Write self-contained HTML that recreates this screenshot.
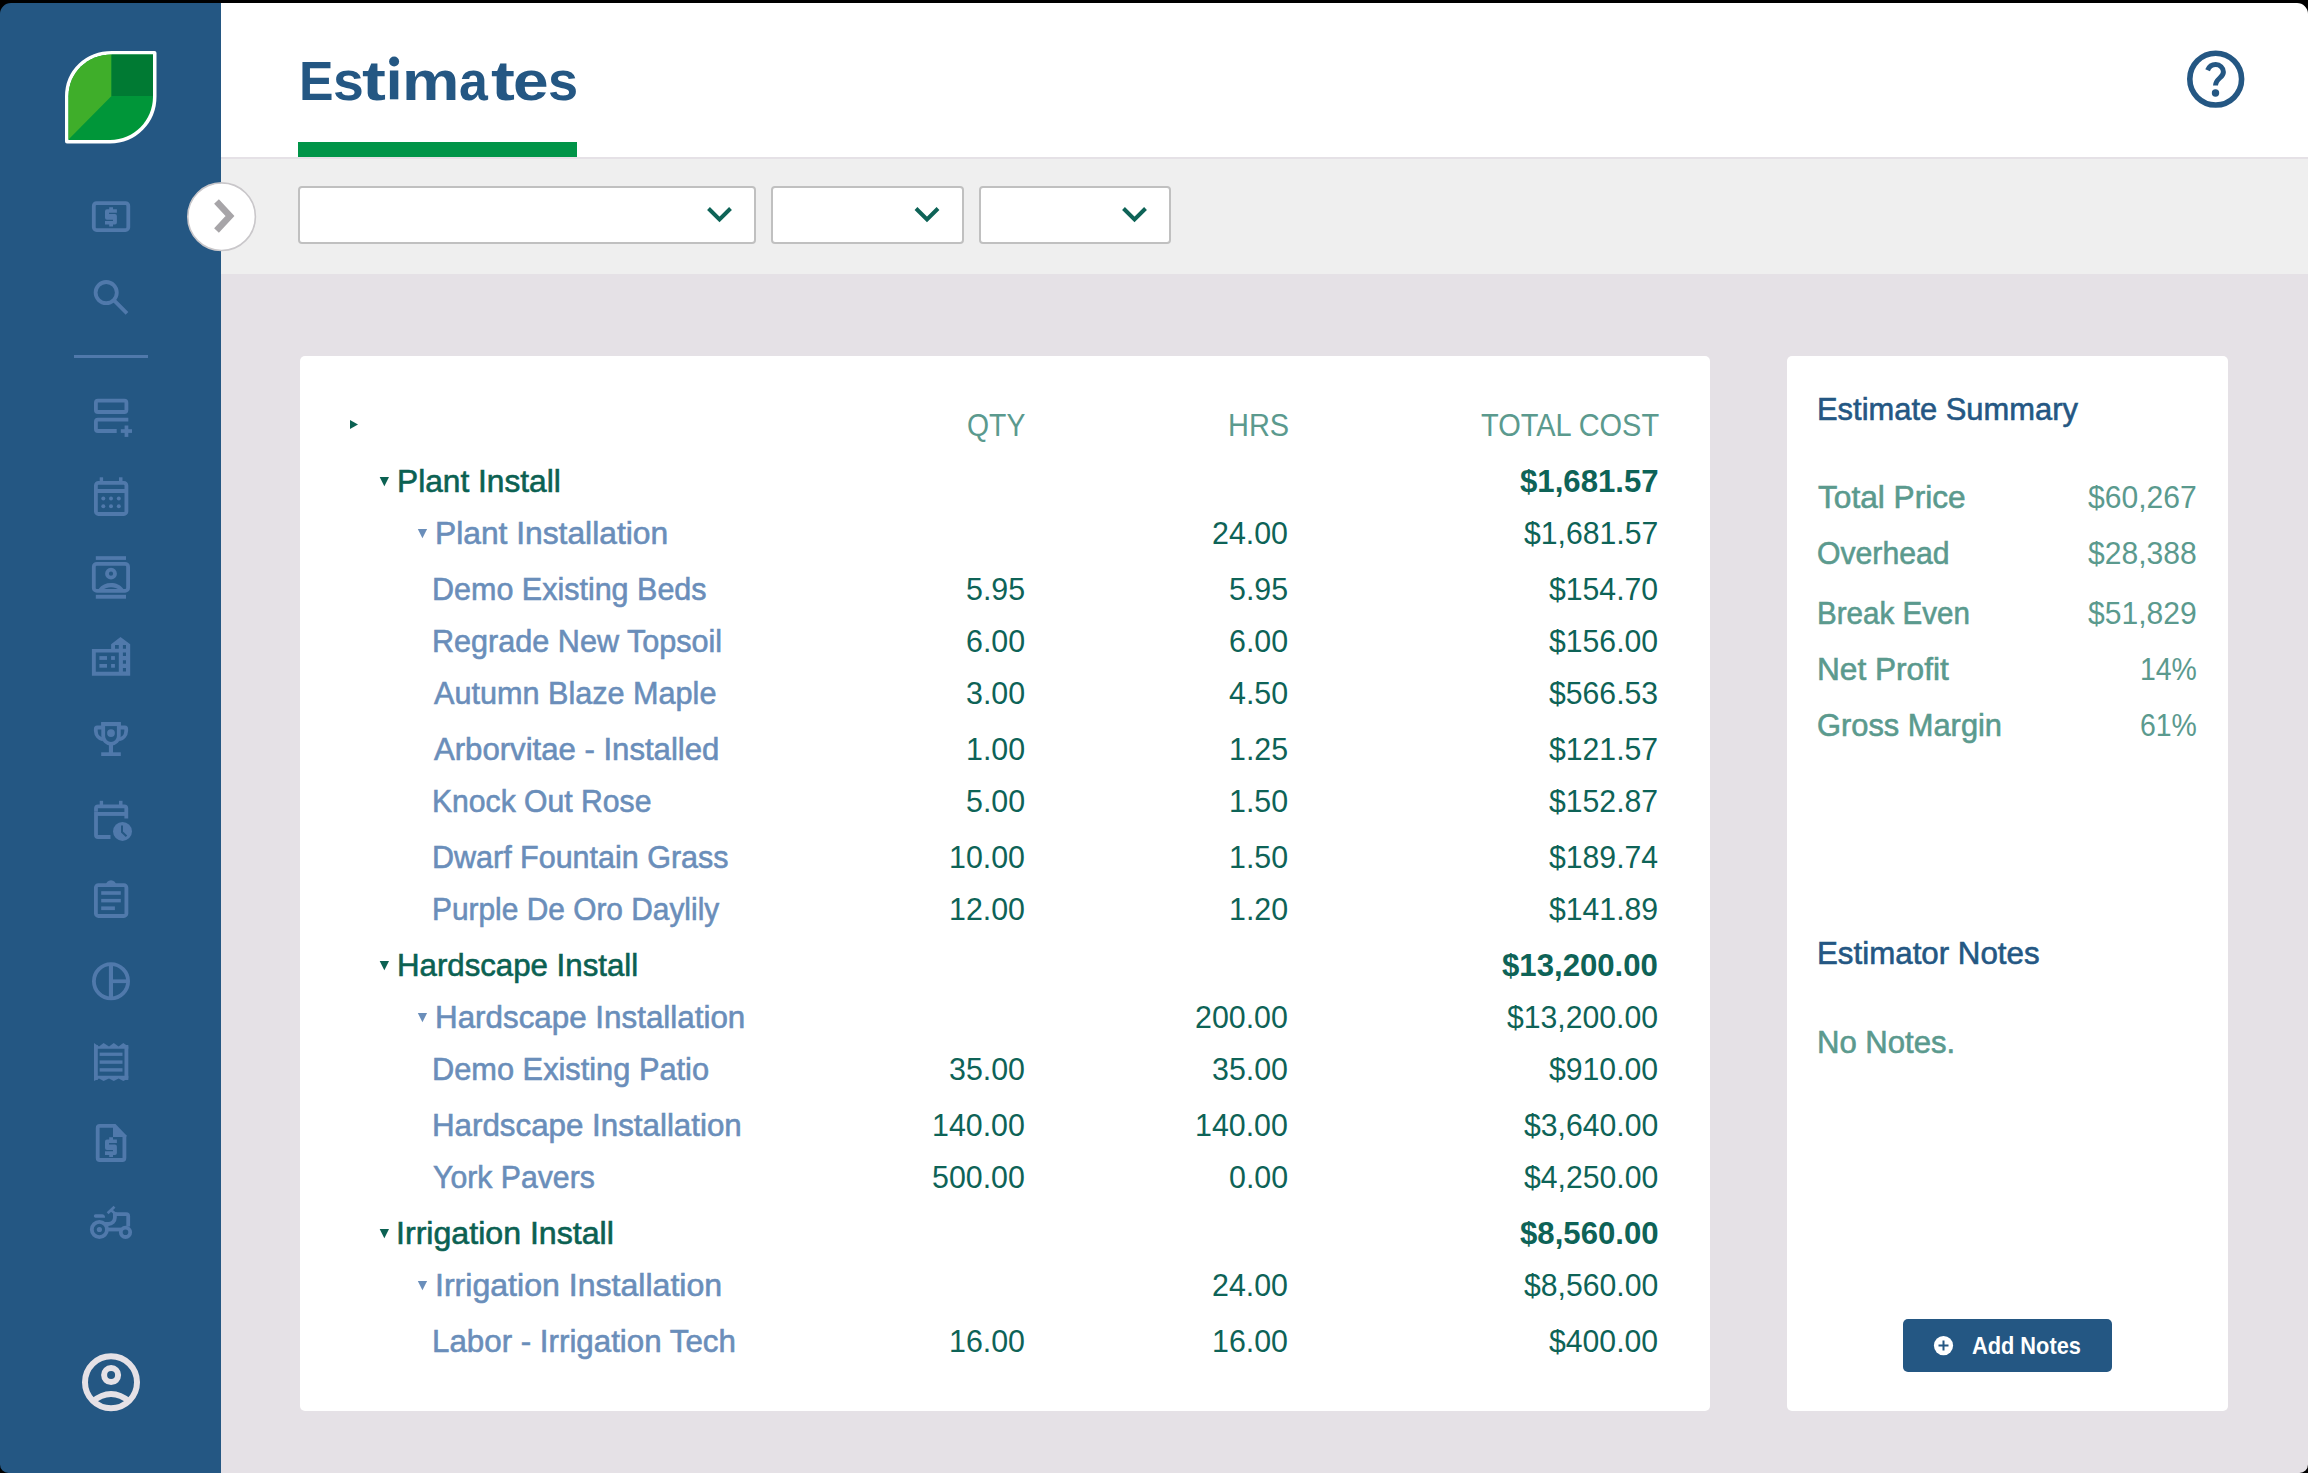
<!DOCTYPE html>
<html><head><meta charset="utf-8"><title>Estimates</title>
<style>
html,body{margin:0;padding:0;}
body{width:2308px;height:1473px;position:relative;overflow:hidden;background:#E5E1E6;font-family:"Liberation Sans",sans-serif;}
.abs{position:absolute;}
.t{position:absolute;white-space:nowrap;transform-origin:0 0;font-family:"Liberation Sans",sans-serif;}
#sidebar{left:0;top:0;width:221px;height:1473px;background:#245783;}
#header{left:221px;top:0;width:2087px;height:157px;background:#fff;}
#hline{left:221px;top:157px;width:2087px;height:2px;background:#E5E1E6;}
#band{left:221px;top:159px;width:2087px;height:115px;background:#EFEFEF;}
#greenbar{left:298px;top:142px;width:279px;height:15px;background:#009448;}
.dd{position:absolute;top:186px;height:54px;background:#fff;border:2px solid #C0C0C0;border-radius:4px;}
.card{position:absolute;top:356px;height:1055px;background:#fff;border-radius:5px;}
#btn{left:1903px;top:1319px;width:209px;height:53px;background:#245783;border-radius:5px;}
svg{position:absolute;left:0;top:0;}
</style></head>
<body>
<div id="sidebar" class="abs"></div>
<div id="header" class="abs"></div>
<div id="hline" class="abs"></div>
<div id="band" class="abs"></div>
<div id="greenbar" class="abs"></div>
<div class="dd" style="left:298px;width:454px;"></div>
<div class="dd" style="left:771px;width:189px;"></div>
<div class="dd" style="left:979px;width:188px;"></div>
<div class="card" style="left:300px;width:1410px;"></div>
<div class="card" style="left:1787px;width:441px;"></div>
<div id="btn" class="abs"></div>

<svg width="2308" height="1473" viewBox="0 0 2308 1473">
<!-- dropdown chevrons -->
<g fill="none" stroke="#0E6357" stroke-width="4" stroke-linecap="butt" stroke-linejoin="miter">
<path d="M708.5 208.5L719.5 219.5L730.5 208.5"/>
<path d="M916 208.5L927 219.5L938 208.5"/>
<path d="M1123.5 208.5L1134.5 219.5L1145.5 208.5"/>
</g>
<!-- collapse button -->
<circle cx="221.6" cy="216.7" r="33.8" fill="#fff" stroke="#C9C7CA" stroke-width="1.6"/>
<path d="M216.5 201.5L230 216L216.5 230.5" fill="none" stroke="#A7A5A8" stroke-width="6.5"/>

<!-- logo -->
<path d="M67 141.5V96.5C67 71 87 53 112 53H154.5V96.5C154.5 121.5 135 141.5 110 141.5Z" fill="#fff" stroke="#fff" stroke-width="4" stroke-linejoin="round"/>
<clipPath id="leaf"><path d="M68.5 140V96.5C68.5 72 88 54.5 112 54.5H153V96.5C153 120.5 134 140 110 140Z"/></clipPath>
<g clip-path="url(#leaf)">
<rect x="60" y="50" width="100" height="95" fill="#009639"/>
<path d="M60 50H111.5V96L66 142H60Z" fill="#3FAE2A"/>
<rect x="111.5" y="50" width="50" height="46" fill="#007A33"/>
</g>

<!-- title i -->
<rect x="389.9" y="70.5" width="8.4" height="28.8" fill="#245783"/>
<circle cx="394.1" cy="61.5" r="5" fill="#245783"/>
<!-- help icon -->
<circle cx="2215.7" cy="79.1" r="25.9" fill="none" stroke="#245783" stroke-width="5.6"/>
<path d="M2207.6 70.3C2209 66.8 2212 64.6 2215.7 64.6C2220 64.6 2223.4 67.8 2223.4 71.9C2223.4 77.6 2215.5 78.6 2215.5 85.6" fill="none" stroke="#245783" stroke-width="5"/>
<circle cx="2215.5" cy="93" r="3.7" fill="#245783"/>

<!-- add notes plus -->
<circle cx="1943.5" cy="1345.6" r="9.6" fill="#fff"/>
<path d="M1938.5 1345.6H1948.5M1943.5 1340.6V1350.6" stroke="#245783" stroke-width="2"/>

<!-- sidebar icons -->
<g fill="none" stroke="#5079AB" stroke-width="3.8">
<!-- dollar box -->
<rect x="93.8" y="203.1" width="34.5" height="27" rx="2.8"/>
<!-- search -->
<circle cx="106.2" cy="292.6" r="10.6"/>
<path d="M113.8 300.2L127 313.4"/>
<!-- stacked rects -->
<rect x="95.9" y="400.7" width="30.5" height="11.3" rx="2"/>
<path d="M116.7 431H97.9A2 2 0 0 1 95.9 429V421.7A2 2 0 0 1 97.9 419.7H128.3"/>
<!-- calendar -->
<rect x="95.9" y="482.9" width="30.5" height="31.1" rx="2.5"/>
<!-- contact -->
<rect x="93.8" y="563.8" width="34.3" height="27.1" rx="3"/>
<circle cx="111" cy="573.7" r="4"/>
<!-- trophy -->
<path d="M103.2 724V736A7.8 7.8 0 0 0 118.8 736V724Z"/>
<path d="M103.2 727.5H97.2A1.5 1.5 0 0 0 95.8 729V731A9 9 0 0 0 103 739.5"/>
<path d="M118.8 727.5H124.8A1.5 1.5 0 0 1 126.2 729V731A9 9 0 0 1 119 739.5"/>
<!-- calendar clock -->
<path d="M96 811.5V835A2 2 0 0 0 98 837H110.5"/>
<path d="M96 811.5V808.3A2 2 0 0 1 98 806.3H124.3A2 2 0 0 1 126.3 808.3V818.5"/>
<!-- clipboard -->
<rect x="95.9" y="885.1" width="30.5" height="30.9" rx="2.5"/>
<!-- pie -->
<circle cx="111" cy="981.2" r="17.1"/>
<!-- doc dollar -->
<path d="M114.9 1125.9H99.7A2 2 0 0 0 97.7 1127.9V1158A2 2 0 0 0 99.7 1160H122.4A2 2 0 0 0 124.4 1158V1135.2"/>
<!-- receipt -->
<path d="M95.9 1045V1080M126.4 1045V1080"/>
<rect x="97.8" y="1048.8" width="26.6" height="27" stroke="none"/>
<!-- tractor -->
<circle cx="99.4" cy="1229.5" r="7.6"/>
<circle cx="125.5" cy="1232.3" r="4.7"/>
<path d="M106 1229.5H121"/>
<path d="M114.9 1212.3V1217.5A6.5 6.5 0 0 1 108.4 1224H105"/>
<path d="M114.9 1214.1H126.2A2 2 0 0 1 128.2 1216.1V1226.5"/>
<!-- user -->
</g>
<g fill="#5079AB">
<!-- dollar sign (box) -->
<path d="M109.2 207.2H113V209.2H116.9V212.8H109V214H114.9A2 2 0 0 1 116.9 216V222.6A2 2 0 0 1 114.9 224.6H113V226.6H109.2V224.6H105V221H113V219.7H107A2 2 0 0 1 105 217.7V211.2A2 2 0 0 1 107 209.2H109.2Z"/>
<!-- plus -->
<rect x="124.6" y="425.5" width="3.7" height="11.4"/>
<rect x="120.8" y="429.2" width="11.2" height="3.7"/>
<!-- calendar tabs & bar & dots -->
<rect x="99.7" y="477.3" width="3.4" height="5"/>
<rect x="119" y="477.3" width="3.5" height="5"/>
<rect x="95" y="489" width="32" height="4"/>
<circle cx="103.3" cy="498.6" r="2"/><circle cx="111" cy="498.6" r="2"/><circle cx="118.8" cy="498.6" r="2"/>
<circle cx="103.3" cy="506.2" r="2"/><circle cx="111" cy="506.2" r="2"/><circle cx="118.8" cy="506.2" r="2"/>
<!-- contact bars + body -->
<rect x="95.8" y="556.2" width="30.2" height="3.7"/>
<rect x="95.8" y="594.8" width="30.2" height="3.9"/>
<path d="M98.8 590V588.8C101.5 585 106 583 111 583C116 583 120.5 585 123.2 588.8V590H119C117 588 114.2 587.2 111 587.2C107.8 587.2 105 588 103 590Z"/>
<!-- building -->
<path fill-rule="evenodd" d="M91.9 675.7V648.9H111.1V644.2L120.5 637.1L130.2 644.2V675.7ZM95.8 652.6V671.8H118.8V652.6ZM115 644.9V648.7H118.8V644.9ZM122.9 644.9V648.7H126V644.9ZM122.9 652.6V656.1H126V652.6ZM122.9 660.2V663.8H126V660.2ZM122.9 668.1V671.6H126V668.1Z"/>
<rect x="99.4" y="656.1" width="7.6" height="3.8"/><rect x="111.1" y="656.1" width="3.8" height="3.8"/>
<rect x="99.4" y="664" width="7.6" height="3.7"/><rect x="111.1" y="664" width="3.8" height="3.7"/>
<!-- trophy rim, dot, stem, base -->
<rect x="101.2" y="722.1" width="19.6" height="4"/>
<circle cx="111" cy="733.1" r="3.9"/>
<rect x="108.9" y="745" width="4.1" height="8"/>
<rect x="101.2" y="752.3" width="19.6" height="3.7"/>
<!-- calendar clock parts -->
<rect x="99.7" y="800.8" width="3.4" height="5"/>
<rect x="119" y="800.8" width="3.5" height="5"/>
<rect x="95" y="812" width="32" height="3.9"/>
<circle cx="122.5" cy="831.4" r="9.5"/>
<!-- clipboard clip + lines -->
<path d="M105.8 885.5A5.2 5.2 0 0 1 116.2 885.5Z"/>
<rect x="101.2" y="891.2" width="19.6" height="3.6"/>
<rect x="101.2" y="898.9" width="19.6" height="3.5"/>
<rect x="101.2" y="906.4" width="13.7" height="3.7"/>
<!-- pie lines -->
<rect x="108.9" y="963" width="4.1" height="37"/>
<rect x="113" y="979.4" width="16" height="3.7"/>
<!-- receipt zigzag top/bottom + lines -->
<path d="M94 1043L99 1046.5L103.6 1043L109 1046.5L113.8 1043L118.6 1046.5L123.3 1043L128.3 1046.5V1048.8H94Z"/>
<path d="M94 1080.9L99 1078.5L103.6 1080.9L109 1078.5L113.8 1080.9L118.6 1078.5L123.3 1080.9L128.3 1078.5V1075.7H94Z"/>
<rect x="99.6" y="1052.6" width="22.9" height="3.3"/>
<rect x="99.6" y="1060.4" width="22.9" height="3.4"/>
<rect x="99.6" y="1068.2" width="22.9" height="3.4"/>
<!-- doc fold -->
<path d="M113 1124H115.5L126.3 1135.2V1137H113Z"/>
<!-- doc dollar sign -->
<path d="M109.2 1137.3H113V1139.4H116.9V1143H109V1144.4H114.9A2 2 0 0 1 116.9 1146.4V1153A2 2 0 0 1 114.9 1155H113V1157H109.2V1155H105V1151.3H113V1150H107A2 2 0 0 1 105 1148V1141.4A2 2 0 0 1 107 1139.4H109.2Z"/>
<!-- tractor seat, wheel hub, steering -->
<path d="M95.6 1214.2H102A3 3 0 0 1 105 1217.8H95.6A1.8 1.8 0 0 1 95.6 1214.2Z"/>
<circle cx="99.4" cy="1229.5" r="2.6"/>
</g>
<path d="M107.6 1213.3L114.5 1206.8M111 1210L115 1213.5" stroke="#5079AB" stroke-width="2.6"/>
<!-- divider -->
<rect x="74" y="355" width="74" height="3" fill="#5079AB"/>
<!-- clock hands (dark) -->
<path d="M122 825.5V832L126.5 836.2" fill="none" stroke="#245783" stroke-width="2"/>
<!-- user icon -->
<g fill="none" stroke="#E5E1E6" stroke-width="6">
<circle cx="111" cy="1382.3" r="26"/>
<circle cx="111.1" cy="1375.1" r="7"/>
<path d="M92 1402Q111 1386 130 1402"/>
</g>

<path d="M350 420L358 424.4L350 429Z" fill="#0B6152"/>
<path d="M379.7 476.9H389L384.35 486.2Z" fill="#0B6152"/>
<path d="M379.7 960.9H389L384.35 970.2Z" fill="#0B6152"/>
<path d="M379.7 1228.9H389L384.35 1238.2Z" fill="#0B6152"/>
<path d="M417.8 528.9H427.1L422.45000000000005 538.2Z" fill="#6A8EBA"/>
<path d="M417.8 1012.9H427.1L422.45000000000005 1022.2Z" fill="#6A8EBA"/>
<path d="M417.8 1280.9H427.1L422.45000000000005 1290.2Z" fill="#6A8EBA"/>

<!-- frame corners -->
<g fill="#000">
<rect x="0" y="0" width="2308" height="3"/>
<path d="M0 3H11A11 11 0 0 0 0 14Z"/>
<path d="M2308 3H2297A11 11 0 0 1 2308 14Z"/>
<path d="M0 1464.5A8.5 8.5 0 0 0 8.5 1473H0Z"/>
<path d="M2308 1464.5A8.5 8.5 0 0 1 2299.5 1473H2308Z"/>
</g>
</svg>

<div class="t" style="left:967.25px;top:405px;font-size:31.5px;line-height:41px;color:#5B9A8E;transform:scaleX(0.9004);">QTY</div>
<div class="t" style="left:1227.61px;top:405px;font-size:31.5px;line-height:41px;color:#5B9A8E;transform:scaleX(0.9196);">HRS</div>
<div class="t" style="left:1480.55px;top:405px;font-size:31.5px;line-height:41px;color:#5B9A8E;transform:scaleX(0.9197);">TOTAL COST</div>
<div class="t" style="left:396.59px;top:461px;font-size:31.5px;line-height:41px;color:#0B6152;-webkit-text-stroke:0.6px #0B6152;transform:scaleX(1.0061);">Plant Install</div>
<div class="t" style="left:1519.77px;top:461px;font-size:31.5px;line-height:41px;color:#0E6357;font-weight:bold;transform:scaleX(0.9890);">$1,681.57</div>
<div class="t" style="left:396.63px;top:945px;font-size:31.5px;line-height:41px;color:#0B6152;-webkit-text-stroke:0.6px #0B6152;transform:scaleX(0.9908);">Hardscape Install</div>
<div class="t" style="left:1502.32px;top:945px;font-size:31.5px;line-height:41px;color:#0E6357;font-weight:bold;transform:scaleX(0.9890);">$13,200.00</div>
<div class="t" style="left:396.23px;top:1213px;font-size:31.5px;line-height:41px;color:#0B6152;-webkit-text-stroke:0.6px #0B6152;transform:scaleX(1.0201);">Irrigation Install</div>
<div class="t" style="left:1519.69px;top:1213px;font-size:31.5px;line-height:41px;color:#0E6357;font-weight:bold;transform:scaleX(0.9890);">$8,560.00</div>
<div class="t" style="left:434.98px;top:513px;font-size:31.5px;line-height:41px;color:#6A8EBA;-webkit-text-stroke:0.6px #6A8EBA;transform:scaleX(1.0085);">Plant Installation</div>
<div class="t" style="left:1211.85px;top:513px;font-size:31.5px;line-height:41px;color:#0E6357;transform:scaleX(0.9640);">24.00</div>
<div class="t" style="left:1524.10px;top:513px;font-size:31.5px;line-height:41px;color:#0E6357;transform:scaleX(0.9580);">$1,681.57</div>
<div class="t" style="left:435.01px;top:997px;font-size:31.5px;line-height:41px;color:#6A8EBA;-webkit-text-stroke:0.6px #6A8EBA;transform:scaleX(0.9956);">Hardscape Installation</div>
<div class="t" style="left:1194.99px;top:997px;font-size:31.5px;line-height:41px;color:#0E6357;transform:scaleX(0.9640);">200.00</div>
<div class="t" style="left:1506.90px;top:997px;font-size:31.5px;line-height:41px;color:#0E6357;transform:scaleX(0.9580);">$13,200.00</div>
<div class="t" style="left:434.63px;top:1265px;font-size:31.5px;line-height:41px;color:#6A8EBA;-webkit-text-stroke:0.6px #6A8EBA;transform:scaleX(1.0185);">Irrigation Installation</div>
<div class="t" style="left:1211.85px;top:1265px;font-size:31.5px;line-height:41px;color:#0E6357;transform:scaleX(0.9640);">24.00</div>
<div class="t" style="left:1523.72px;top:1265px;font-size:31.5px;line-height:41px;color:#0E6357;transform:scaleX(0.9580);">$8,560.00</div>
<div class="t" style="left:431.58px;top:569px;font-size:31.5px;line-height:41px;color:#6A8EBA;-webkit-text-stroke:0.6px #6A8EBA;transform:scaleX(0.9680);">Demo Existing Beds</div>
<div class="t" style="left:966.15px;top:569px;font-size:31.5px;line-height:41px;color:#0E6357;transform:scaleX(0.9640);">5.95</div>
<div class="t" style="left:1228.85px;top:569px;font-size:31.5px;line-height:41px;color:#0E6357;transform:scaleX(0.9640);">5.95</div>
<div class="t" style="left:1548.92px;top:569px;font-size:31.5px;line-height:41px;color:#0E6357;transform:scaleX(0.9580);">$154.70</div>
<div class="t" style="left:431.58px;top:621px;font-size:31.5px;line-height:41px;color:#6A8EBA;-webkit-text-stroke:0.6px #6A8EBA;transform:scaleX(0.9710);">Regrade New Topsoil</div>
<div class="t" style="left:966.08px;top:621px;font-size:31.5px;line-height:41px;color:#0E6357;transform:scaleX(0.9640);">6.00</div>
<div class="t" style="left:1228.78px;top:621px;font-size:31.5px;line-height:41px;color:#0E6357;transform:scaleX(0.9640);">6.00</div>
<div class="t" style="left:1548.92px;top:621px;font-size:31.5px;line-height:41px;color:#0E6357;transform:scaleX(0.9580);">$156.00</div>
<div class="t" style="left:434.02px;top:673px;font-size:31.5px;line-height:41px;color:#6A8EBA;-webkit-text-stroke:0.6px #6A8EBA;transform:scaleX(0.9717);">Autumn Blaze Maple</div>
<div class="t" style="left:966.08px;top:673px;font-size:31.5px;line-height:41px;color:#0E6357;transform:scaleX(0.9640);">3.00</div>
<div class="t" style="left:1228.78px;top:673px;font-size:31.5px;line-height:41px;color:#0E6357;transform:scaleX(0.9640);">4.50</div>
<div class="t" style="left:1549.07px;top:673px;font-size:31.5px;line-height:41px;color:#0E6357;transform:scaleX(0.9580);">$566.53</div>
<div class="t" style="left:434.02px;top:729px;font-size:31.5px;line-height:41px;color:#6A8EBA;-webkit-text-stroke:0.6px #6A8EBA;transform:scaleX(0.9878);">Arborvitae - Installed</div>
<div class="t" style="left:966.08px;top:729px;font-size:31.5px;line-height:41px;color:#0E6357;transform:scaleX(0.9640);">1.00</div>
<div class="t" style="left:1228.85px;top:729px;font-size:31.5px;line-height:41px;color:#0E6357;transform:scaleX(0.9640);">1.25</div>
<div class="t" style="left:1549.29px;top:729px;font-size:31.5px;line-height:41px;color:#0E6357;transform:scaleX(0.9580);">$121.57</div>
<div class="t" style="left:431.61px;top:781px;font-size:31.5px;line-height:41px;color:#6A8EBA;-webkit-text-stroke:0.6px #6A8EBA;transform:scaleX(0.9566);">Knock Out Rose</div>
<div class="t" style="left:966.08px;top:781px;font-size:31.5px;line-height:41px;color:#0E6357;transform:scaleX(0.9640);">5.00</div>
<div class="t" style="left:1228.78px;top:781px;font-size:31.5px;line-height:41px;color:#0E6357;transform:scaleX(0.9640);">1.50</div>
<div class="t" style="left:1549.29px;top:781px;font-size:31.5px;line-height:41px;color:#0E6357;transform:scaleX(0.9580);">$152.87</div>
<div class="t" style="left:431.58px;top:837px;font-size:31.5px;line-height:41px;color:#6A8EBA;-webkit-text-stroke:0.6px #6A8EBA;transform:scaleX(0.9678);">Dwarf Fountain Grass</div>
<div class="t" style="left:949.15px;top:837px;font-size:31.5px;line-height:41px;color:#0E6357;transform:scaleX(0.9640);">10.00</div>
<div class="t" style="left:1228.78px;top:837px;font-size:31.5px;line-height:41px;color:#0E6357;transform:scaleX(0.9640);">1.50</div>
<div class="t" style="left:1548.62px;top:837px;font-size:31.5px;line-height:41px;color:#0E6357;transform:scaleX(0.9580);">$189.74</div>
<div class="t" style="left:431.64px;top:889px;font-size:31.5px;line-height:41px;color:#6A8EBA;-webkit-text-stroke:0.6px #6A8EBA;transform:scaleX(0.9484);">Purple De Oro Daylily</div>
<div class="t" style="left:949.15px;top:889px;font-size:31.5px;line-height:41px;color:#0E6357;transform:scaleX(0.9640);">12.00</div>
<div class="t" style="left:1228.78px;top:889px;font-size:31.5px;line-height:41px;color:#0E6357;transform:scaleX(0.9640);">1.20</div>
<div class="t" style="left:1549.14px;top:889px;font-size:31.5px;line-height:41px;color:#0E6357;transform:scaleX(0.9580);">$141.89</div>
<div class="t" style="left:431.56px;top:1049px;font-size:31.5px;line-height:41px;color:#6A8EBA;-webkit-text-stroke:0.6px #6A8EBA;transform:scaleX(0.9767);">Demo Existing Patio</div>
<div class="t" style="left:949.15px;top:1049px;font-size:31.5px;line-height:41px;color:#0E6357;transform:scaleX(0.9640);">35.00</div>
<div class="t" style="left:1211.85px;top:1049px;font-size:31.5px;line-height:41px;color:#0E6357;transform:scaleX(0.9640);">35.00</div>
<div class="t" style="left:1548.92px;top:1049px;font-size:31.5px;line-height:41px;color:#0E6357;transform:scaleX(0.9580);">$910.00</div>
<div class="t" style="left:431.52px;top:1105px;font-size:31.5px;line-height:41px;color:#6A8EBA;-webkit-text-stroke:0.6px #6A8EBA;transform:scaleX(0.9937);">Hardscape Installation</div>
<div class="t" style="left:932.29px;top:1105px;font-size:31.5px;line-height:41px;color:#0E6357;transform:scaleX(0.9640);">140.00</div>
<div class="t" style="left:1194.99px;top:1105px;font-size:31.5px;line-height:41px;color:#0E6357;transform:scaleX(0.9640);">140.00</div>
<div class="t" style="left:1523.72px;top:1105px;font-size:31.5px;line-height:41px;color:#0E6357;transform:scaleX(0.9580);">$3,640.00</div>
<div class="t" style="left:433.42px;top:1157px;font-size:31.5px;line-height:41px;color:#6A8EBA;-webkit-text-stroke:0.6px #6A8EBA;transform:scaleX(0.9594);">York Pavers</div>
<div class="t" style="left:932.29px;top:1157px;font-size:31.5px;line-height:41px;color:#0E6357;transform:scaleX(0.9640);">500.00</div>
<div class="t" style="left:1228.78px;top:1157px;font-size:31.5px;line-height:41px;color:#0E6357;transform:scaleX(0.9640);">0.00</div>
<div class="t" style="left:1523.72px;top:1157px;font-size:31.5px;line-height:41px;color:#0E6357;transform:scaleX(0.9580);">$4,250.00</div>
<div class="t" style="left:431.52px;top:1321px;font-size:31.5px;line-height:41px;color:#6A8EBA;-webkit-text-stroke:0.6px #6A8EBA;transform:scaleX(0.9936);">Labor - Irrigation Tech</div>
<div class="t" style="left:949.15px;top:1321px;font-size:31.5px;line-height:41px;color:#0E6357;transform:scaleX(0.9640);">16.00</div>
<div class="t" style="left:1211.85px;top:1321px;font-size:31.5px;line-height:41px;color:#0E6357;transform:scaleX(0.9640);">16.00</div>
<div class="t" style="left:1548.92px;top:1321px;font-size:31.5px;line-height:41px;color:#0E6357;transform:scaleX(0.9580);">$400.00</div>
<div class="t" style="left:1816.95px;top:389px;font-size:31.5px;line-height:41px;color:#245783;-webkit-text-stroke:0.6px #245783;transform:scaleX(0.9806);">Estimate Summary</div>
<div class="t" style="left:1817.59px;top:477px;font-size:31.5px;line-height:41px;color:#5B9A8E;-webkit-text-stroke:0.6px #5B9A8E;transform:scaleX(1.0036);">Total Price</div>
<div class="t" style="left:2088.43px;top:477px;font-size:31.5px;line-height:41px;color:#5B9A8E;transform:scaleX(0.9550);">$60,267</div>
<div class="t" style="left:1816.87px;top:533px;font-size:31.5px;line-height:41px;color:#5B9A8E;-webkit-text-stroke:0.6px #5B9A8E;transform:scaleX(0.9583);">Overhead</div>
<div class="t" style="left:2088.21px;top:533px;font-size:31.5px;line-height:41px;color:#5B9A8E;transform:scaleX(0.9550);">$28,388</div>
<div class="t" style="left:1817.06px;top:593px;font-size:31.5px;line-height:41px;color:#5B9A8E;-webkit-text-stroke:0.6px #5B9A8E;transform:scaleX(0.9386);">Break Even</div>
<div class="t" style="left:2088.28px;top:593px;font-size:31.5px;line-height:41px;color:#5B9A8E;transform:scaleX(0.9550);">$51,829</div>
<div class="t" style="left:1816.89px;top:649px;font-size:31.5px;line-height:41px;color:#5B9A8E;-webkit-text-stroke:0.6px #5B9A8E;transform:scaleX(1.0036);">Net Profit</div>
<div class="t" style="left:2139.70px;top:649px;font-size:31.5px;line-height:41px;color:#5B9A8E;transform:scaleX(0.9020);">14%</div>
<div class="t" style="left:1817.26px;top:705px;font-size:31.5px;line-height:41px;color:#5B9A8E;-webkit-text-stroke:0.6px #5B9A8E;transform:scaleX(0.9787);">Gross Margin</div>
<div class="t" style="left:2139.70px;top:705px;font-size:31.5px;line-height:41px;color:#5B9A8E;transform:scaleX(0.9020);">61%</div>
<div class="t" style="left:1816.92px;top:933px;font-size:31.5px;line-height:41px;color:#245783;-webkit-text-stroke:0.6px #245783;transform:scaleX(0.9935);">Estimator Notes</div>
<div class="t" style="left:1816.94px;top:1022px;font-size:31.5px;line-height:41px;color:#5B9A8E;-webkit-text-stroke:0.6px #5B9A8E;transform:scaleX(0.9860);">No Notes.</div>
<div class="t" style="left:1972.16px;top:1331px;font-size:23.7px;line-height:31px;color:#FFFFFF;font-weight:bold;transform:scaleX(0.9191);">Add Notes</div>
<div class="t" style="left:299.20px;top:44.5px;font-size:55.4px;line-height:72px;color:#245783;font-weight:bold;transform:scaleX(0.9348);">E</div>
<div class="t" style="left:333.06px;top:44.5px;font-size:55.4px;line-height:72px;color:#245783;font-weight:bold;transform:scaleX(1.0003);">s</div>
<div class="t" style="left:362.00px;top:44.5px;font-size:55.4px;line-height:72px;color:#245783;font-weight:bold;transform:scaleX(1.2973);">t</div>
<div class="t" style="left:401.61px;top:44.5px;font-size:55.4px;line-height:72px;color:#245783;font-weight:bold;transform:scaleX(1.1647);">m</div>
<div class="t" style="left:458.95px;top:44.5px;font-size:55.4px;line-height:72px;color:#245783;font-weight:bold;transform:scaleX(0.9356);">a</div>
<div class="t" style="left:491.40px;top:44.5px;font-size:55.4px;line-height:72px;color:#245783;font-weight:bold;transform:scaleX(1.2973);">t</div>
<div class="t" style="left:513.44px;top:44.5px;font-size:55.4px;line-height:72px;color:#245783;font-weight:bold;transform:scaleX(1.1560);">e</div>
<div class="t" style="left:547.90px;top:44.5px;font-size:55.4px;line-height:72px;color:#245783;font-weight:bold;transform:scaleX(0.9777);">s</div>
</body></html>
